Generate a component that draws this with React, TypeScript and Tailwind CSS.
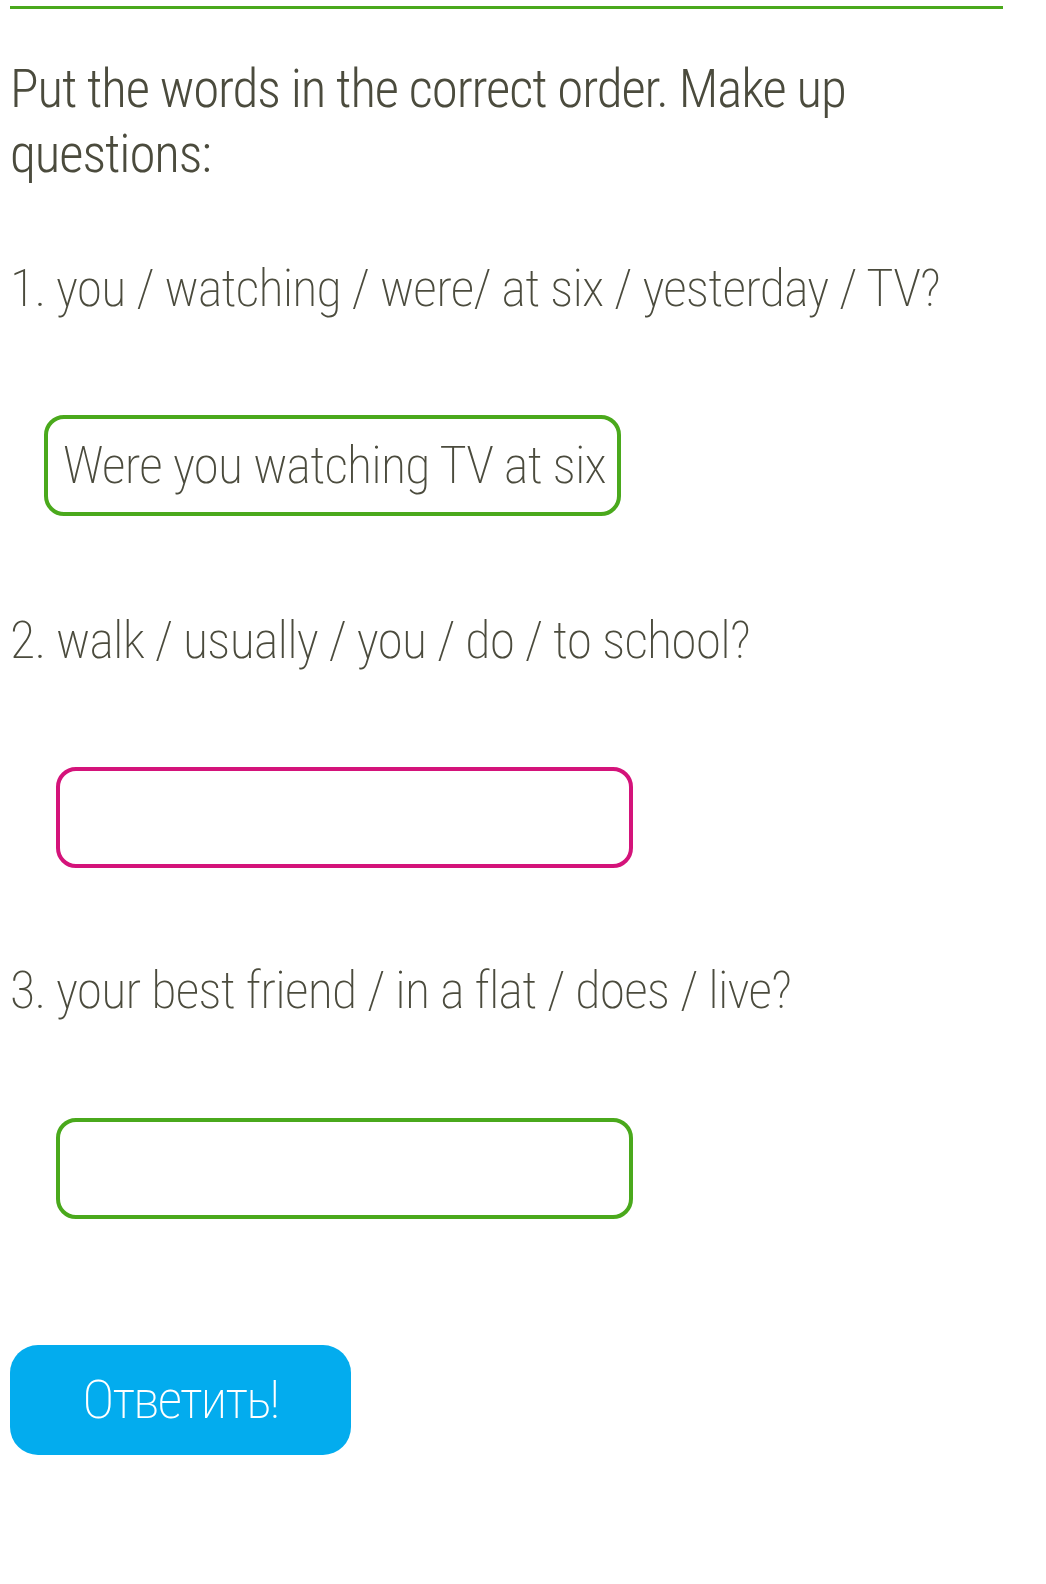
import React from "react";

const font = "font-['Roboto',sans-serif] [font-stretch:75%]";

function Item({ text }: { text: string }) {
  return (
    <p className={`${font} text-[52px] leading-[60px] font-extralight tracking-[-0.8px] text-[#4b4b3d] whitespace-nowrap`}>
      {text}
    </p>
  );
}

function Box({ color, offset, value }: { color: string; offset: string; value?: string }) {
  return (
    <div
      className={`${offset} w-[577px] h-[101px] border-[4px] rounded-[20px] bg-white flex items-center overflow-hidden pl-[15px] ${color}`}
    >
      {value ? (
        <span className={`${font} text-[52px] leading-[60px] font-extralight tracking-[-0.8px] text-[#4b4b3d] whitespace-nowrap`}>
          {value}
        </span>
      ) : null}
    </div>
  );
}

export default function App() {
  return (
    <div className="w-[1046px] min-h-[1584px] bg-white px-[10px] pt-[6px]">
      <div className="w-[993px] h-[3px] bg-[#4aa91c]" />
      <h1 className={`${font} mt-[48px] text-[53px] leading-[65px] font-[340] tracking-[-1.1px] text-[#4b4b3d] w-[900px]`}>
        Put the words in the correct order. Make up questions:
      </h1>
      <div className="mt-[72px]">
        <Item text="1. you / watching / were/ at six / yesterday / TV?" />
      </div>
      <div className="mt-[96px]">
        <Box color="border-[#4aa91c]" offset="ml-[34px]" value="Were you watching TV at six" />
      </div>
      <div className="mt-[95px]">
        <Item text="2. walk / usually / you / do / to school?" />
      </div>
      <div className="mt-[96px]">
        <Box color="border-[#d4137a]" offset="ml-[46px]" />
      </div>
      <div className="mt-[93px]">
        <Item text="3. your best friend / in a flat / does / live?" />
      </div>
      <div className="mt-[97px]">
        <Box color="border-[#4aa91c]" offset="ml-[46px]" />
      </div>
      <div className="mt-[126px]">
        <button
          type="button"
          className={`${font} w-[341px] h-[110px] rounded-[28px] bg-[#03acee] text-white text-[54px] leading-none font-extralight tracking-[-1.8px] flex items-center justify-center`}
        >
          Ответить!
        </button>
      </div>
    </div>
  );
}
